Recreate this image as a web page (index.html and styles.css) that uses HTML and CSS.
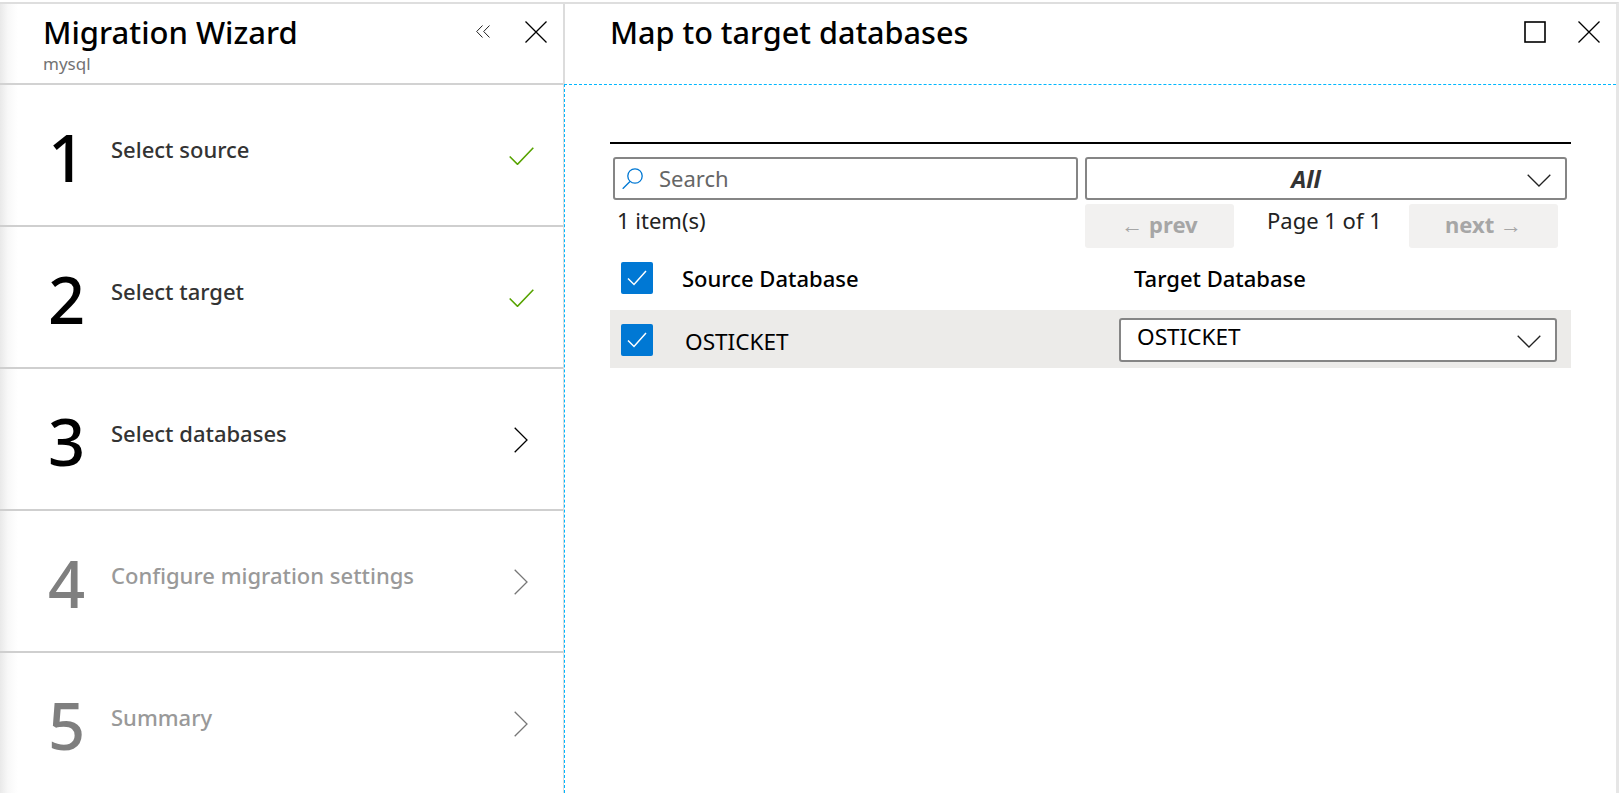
FILE: index.html
```html
<!DOCTYPE html>
<html lang="en">
<head>
<meta charset="utf-8">
<title>Migration Wizard</title>
<link rel="stylesheet" href="styles.css">
</head>
<body>
<div class="app">
  <aside class="wizard">
    <header class="wizard-head">
      <div class="wizard-titles">
        <h1 class="title">Migration Wizard</h1>
        <div class="subtitle">mysql</div>
      </div>
      <svg class="icon-collapse" viewBox="0 0 14 13" width="14" height="13"><path d="M6.5 .5 .7 6.5l5.8 6M13.5 .5 7.7 6.5l5.8 6"/></svg>
      <svg class="icon-close" viewBox="0 0 22 22" width="22" height="22"><path d="M.5 .5l21 21M21.5 .5l-21 21"/></svg>
    </header>
    <div class="step">
      <div class="num">1</div><div class="label">Select source</div>
      <svg class="step-icon check" viewBox="0 0 25 18" width="25" height="18"><path d="M.7 9.5l7.8 7.8L24.3 .7"/></svg>
    </div>
    <div class="step">
      <div class="num">2</div><div class="label">Select target</div>
      <svg class="step-icon check" viewBox="0 0 25 18" width="25" height="18"><path d="M.7 9.5l7.8 7.8L24.3 .7"/></svg>
    </div>
    <div class="step">
      <div class="num">3</div><div class="label">Select databases</div>
      <svg class="step-icon chevron" viewBox="0 0 14 26" width="14" height="26"><path d="M.7 .7 13 13 .7 25.3"/></svg>
    </div>
    <div class="step off">
      <div class="num">4</div><div class="label">Configure migration settings</div>
      <svg class="step-icon chevron" viewBox="0 0 14 26" width="14" height="26"><path d="M.7 .7 13 13 .7 25.3"/></svg>
    </div>
    <div class="step off last">
      <div class="num">5</div><div class="label">Summary</div>
      <svg class="step-icon chevron" viewBox="0 0 14 26" width="14" height="26"><path d="M.7 .7 13 13 .7 25.3"/></svg>
    </div>
  </aside>
  <main class="blade">
    <header class="blade-head">
      <h2 class="title">Map to target databases</h2>
      <svg class="icon-max" viewBox="0 0 22 22" width="22" height="22"><rect x="1" y="1" width="20" height="20"/></svg>
      <svg class="icon-close" viewBox="0 0 22 22" width="22" height="22"><path d="M.5 .5l21 21M21.5 .5l-21 21"/></svg>
    </header>
    <section class="blade-body">
      <div class="rule"></div>
      <div class="toolbar">
        <div class="search">
          <svg class="search-icon" viewBox="0 0 21 21" width="21" height="21"><circle cx="13" cy="8" r="7.2"/><path d="M8 13.5 .7 20.8"/></svg>
          <span class="search-text">Search</span>
        </div>
        <div class="filter">
          <span class="filter-text">All</span>
          <svg class="chev-down" viewBox="0 0 24 13" width="24" height="13"><path d="M.7 .7 12 12 23.3 .7"/></svg>
        </div>
      </div>
      <div class="pager">
        <span class="count">1 item(s)</span>
        <span class="pg-btn">← prev</span>
        <span class="page">Page 1 of 1</span>
        <span class="pg-btn">next →</span>
      </div>
      <div class="thead">
        <span class="cb"><svg viewBox="0 0 20 16" width="20" height="16"><path d="M1 8.5l6 6L19 1"/></svg></span>
        <span class="th-source">Source Database</span>
        <span class="th-target">Target Database</span>
      </div>
      <div class="trow">
        <span class="cb"><svg viewBox="0 0 20 16" width="20" height="16"><path d="M1 8.5l6 6L19 1"/></svg></span>
        <span class="td-source">OSTICKET</span>
        <div class="td-select">
          <span class="td-select-text">OSTICKET</span>
          <svg class="chev-down" viewBox="0 0 24 13" width="24" height="13"><path d="M.7 .7 12 12 23.3 .7"/></svg>
        </div>
      </div>
    </section>
  </main>
</div>
</body>
</html>
```

FILE: styles.css
```css
* { box-sizing: border-box; }
html, body { margin: 0; height: 793px; overflow: hidden; background: #fff; }
body { padding-top: 2px; font-family: "Noto Sans", "Open Sans", sans-serif; color: #000; }
svg { fill: none; stroke: currentColor; stroke-width: 1.3; flex: none; display: block; }

.app {
  display: flex;
  height: 791px;
  border-top: 2px solid #dedede;
  border-right: 3px solid #e6e6e6;
}

.wizard {
  width: 564px;
  flex: none;
  border-right: 1px solid #dcdcdc;
  background: linear-gradient(90deg, #e9e9e9 0, #f8f8f8 8px, #fff 18px);
}
.wizard-head {
  height: 81px;
  display: flex;
  align-items: flex-start;
  padding: 16px 16px 0 43px;
  border-bottom: 2px solid #d2d2d2;
}
.wizard-titles { flex: 1; }
.title { margin: 0; font-size: 31px; line-height: 24px; font-weight: 500; color: #000; }
.blade-head .title { font-size: 30.6px; }
.subtitle { font-size: 17px; line-height: 20px; margin-top: 10px; color: #737373; }
.icon-collapse { margin-top: 5px; margin-right: 35px; color: #222; stroke-width: 1; }
.icon-close { margin-top: 1px; color: #000; stroke-width: 1.3; }

.step {
  height: 142px;
  display: flex;
  align-items: flex-start;
  border-bottom: 2px solid #cfcfcf;
  padding-left: 48px;
}
.step.last { border-bottom: 0; }
.num { width: 63px; flex: none; font-size: 65px; font-weight: 500; line-height: 70px; margin-top: 37px; color: #000; }
.label { flex: 1; font-size: 22px; line-height: 28px; margin-top: 50px; font-weight: 500; color: #333; }
.step-icon { margin-right: 29px; margin-top: 62px; }
.check { color: #57a300; stroke-width: 1.6; }
.chevron { margin-right: 35px; margin-top: 58px; color: #000; }
.off .num { color: #7f7f7f; }
.off .label { color: #999; }
.off .chevron { color: #777; }

.blade { flex: 1; min-width: 0; display: flex; flex-direction: column; }
.blade-head {
  height: 80px;
  display: flex;
  align-items: flex-start;
  padding: 16px 16px 0 45px;
  border-left: 1px solid #dcdcdc;
}
.blade-head .title { flex: 1; }
.icon-max { margin-top: 1px; margin-right: 32px; color: #000; stroke-width: 1.6; }

.blade-body {
  flex: 1;
  border-top: 1px dashed #00b7ff;
  border-left: 1px dashed #00b7ff;
  padding: 57px 0 0 45px;
}
.rule { width: 961px; height: 2px; background: #000; }

.toolbar { display: flex; gap: 7px; margin: 13px 0 0 3px; }
.search, .filter {
  height: 43px;
  display: flex;
  align-items: center;
  border: 2px solid #858585;
  border-radius: 3px;
}
.search { width: 465px; padding-left: 7px; }
.search-icon { color: #0078d4; }
.search-text { margin: 0 0 2px 16px; font-size: 22px; color: #666; line-height: 26px; }
.filter { width: 482px; position: relative; justify-content: center; padding-right: 40px; }
.filter-text { font-size: 24px; font-weight: 700; font-style: italic; color: #333; line-height: 30px; }
.filter .chev-down { position: absolute; right: 14px; top: 15px; color: #222; }

.pager { display: flex; align-items: flex-start; margin: 4px 0 0 7px; height: 44px; }
.count { width: 468px; font-size: 22px; line-height: 28px; margin-top: 2px; color: #222; }
.pg-btn {
  width: 149px;
  height: 44px;
  border-radius: 3px;
  background: #f2f1f0;
  color: #a6a6a6;
  font-size: 22px;
  font-weight: 700;
  text-align: center;
  line-height: 40px;
}
.page { width: 175px; padding-left: 33px; font-size: 22px; line-height: 28px; margin-top: 2px; color: #222; }

.thead { display: flex; align-items: center; height: 32px; margin: 14px 0 0 11px; }
.cb {
  width: 32px;
  height: 32px;
  flex: none;
  display: flex;
  align-items: center;
  justify-content: center;
  background: #0078d4;
  border-radius: 2px;
  color: #fff;
}
.cb svg { stroke-width: 1.5; }
.th-source { width: 452px; margin-left: 29px; font-size: 22px; font-weight: 500; }
.th-target { font-size: 22px; font-weight: 500; }

.trow {
  width: 961px;
  height: 58px;
  margin-top: 16px;
  padding: 8px 14px 6px 11px;
  display: flex;
  align-items: flex-start;
  background: #ecebe9;
}
.trow .cb { margin-top: 6px; }
.td-source { width: 434px; margin-left: 32px; font-size: 22.6px; line-height: 30px; margin-top: 9px; }
.td-select {
  flex: 1;
  height: 44px;
  position: relative;
  display: flex;
  align-items: flex-start;
  background: #fff;
  border: 2px solid #858585;
  border-radius: 3px;
  padding-left: 16px;
}
.td-select-text { font-size: 22.6px; line-height: 30px; margin-top: 2px; }
.td-select .chev-down { position: absolute; right: 14px; top: 15px; color: #222; }
```
